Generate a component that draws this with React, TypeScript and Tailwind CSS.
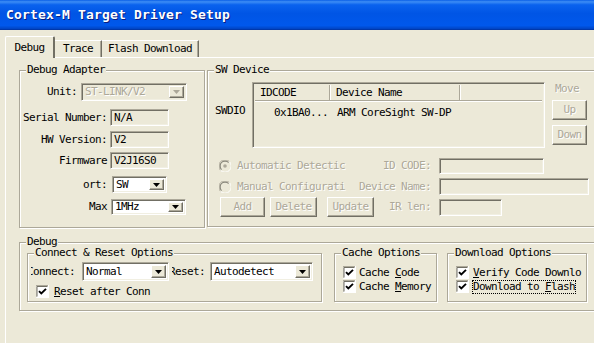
import React from "react";

const sunken =
  "border border-t-[#ACA899] border-l-[#ACA899] border-b-white border-r-white shadow-[inset_1px_1px_0_#716F64,inset_-1px_-1px_0_#F1EFE2]";
const raised =
  "border border-t-white border-l-white border-b-[#716F64] border-r-[#716F64] shadow-[inset_-1px_-1px_0_#ACA899]";
const dim = "text-[#ACA899] [text-shadow:1px_1px_0_#fff]";

function Group({ label, className, children }: { label: string; className: string; children?: React.ReactNode }) {
  return (
    <div className={`relative border border-[#ACA899] shadow-[inset_1px_1px_0_#fff,1px_1px_0_#fff] ${className}`}>
      <span className="absolute -top-[6px] left-[6px] bg-[#ECE9D8] px-[1px] leading-[10px] whitespace-nowrap">
        {label}
      </span>
      {children}
    </div>
  );
}

function Arrow({ disabled }: { disabled?: boolean }) {
  return (
    <svg width="7" height="4" viewBox="0 0 7 4">
      <path d="M0 0h7L3.5 4z" fill={disabled ? "#ACA899" : "#000"} />
    </svg>
  );
}

function Combo({ value, className, disabled }: { value: string; className: string; disabled?: boolean }) {
  return (
    <div className={`flex p-[2px] ${sunken} ${disabled ? "bg-[#ECE9D8]" : "bg-white"} ${className}`}>
      <span className={`flex-1 pl-[1px] flex items-center whitespace-nowrap ${disabled ? dim : ""}`}>{value}</span>
      <span className={`w-[15px] flex items-center justify-center bg-[#ECE9D8] ${raised}`}>
        <Arrow disabled={disabled} />
      </span>
    </div>
  );
}

function Field({ value, className }: { value?: string; className: string }) {
  return (
    <div className={`flex items-center pl-[3px] bg-[#ECE9D8] ${sunken} ${className}`}>
      <span className="whitespace-nowrap">{value}</span>
    </div>
  );
}

function Button({ label, className }: { label: string; className: string }) {
  return (
    <div className={`flex items-center justify-center bg-[#ECE9D8] ${raised} ${dim} ${className}`}>{label}</div>
  );
}

function Check() {
  return (
    <svg width="13" height="13" viewBox="0 0 13 13" className="shrink-0">
      <rect x="0" y="0" width="13" height="13" fill="#fff" />
      <path d="M0 12.5V0.5H12.5" stroke="#ACA899" fill="none" />
      <path d="M1 11.5V1.5H11.5" stroke="#716F64" fill="none" />
      <path d="M0.5 13V12.5H12.5V0" stroke="#fff" fill="none" />
      <path d="M3 6.2L5.3 8.5L10 3.8" stroke="#000" strokeWidth="1.9" fill="none" />
    </svg>
  );
}

function Radio({ on }: { on?: boolean }) {
  return (
    <svg width="12" height="12" viewBox="0 0 12 12" className="shrink-0">
      <circle cx="6" cy="6" r="5.5" fill="#ECE9D8" />
      <path d="M1.6 10.4A5.5 5.5 0 0 1 10.4 1.6" stroke="#ACA899" fill="none" />
      <path d="M2.5 9.5A4.5 4.5 0 0 1 9.5 2.5" stroke="#716F64" fill="none" />
      <path d="M10.4 1.6A5.5 5.5 0 0 1 1.6 10.4" stroke="#fff" fill="none" />
      {on && <circle cx="6" cy="6" r="1.8" fill="#ACA899" />}
    </svg>
  );
}

export default function App() {
  return (
    <div className="w-[594px] h-[343px] overflow-hidden bg-[#ECE9D8] text-black font-['DejaVu_Sans_Mono',monospace] text-[11px] tracking-[-0.62px] leading-[12px] flex flex-col">
      {/* title bar */}
      <div className="h-[30px] shrink-0 flex items-center pl-[6px] bg-[linear-gradient(to_bottom,#0A5FE6_0%,#3D8DF5_6%,#0A62EE_16%,#0055E5_45%,#0058EC_85%,#0046C8_95%,#00309C_100%)]">
        <span className="text-white font-bold text-[13px] tracking-[0.17px] [text-shadow:1px_1px_0_#0A1E80]">
          Cortex-M Target Driver Setup
        </span>
      </div>

      <div className="flex flex-1">
        <div className="w-[3px] bg-[#0058EE] shadow-[inset_-1px_0_0_#3B7CF0]" />
        <div className="flex-1 flex flex-col pl-[5px] pt-[6px]">
          {/* tabs */}
          <div className="flex items-end h-[21px]">
            <div className="relative z-10 -mb-px h-[22px] w-[50px] flex items-center justify-center bg-[#ECE9D8] border-t border-l border-white border-r-2 border-r-[#716F64] rounded-t-[2px]">
              Debug
            </div>
            <div className="h-[17px] w-[47px] flex items-center justify-center border-t border-white border-r border-r-[#716F64] shadow-[inset_-1px_0_0_#ACA899]">
              Trace
            </div>
            <div className="h-[17px] w-[97px] flex items-center justify-center border-t border-white border-r border-r-[#716F64] shadow-[inset_-1px_0_0_#ACA899]">
              Flash Download
            </div>
          </div>

          {/* panel */}
          <div className="flex-1 w-[600px] border-t border-l border-white pl-[13px] pt-[12px]">
            <div className="flex gap-[2px]">
              <Group label="Debug Adapter" className="w-[186px] h-[158px] shrink-0">
                <div className="flex flex-col">
                  <div className="mt-[12px] h-[18px] flex items-center">
                    <span className="w-[57px] text-right">Unit:</span>
                    <Combo value="ST-LINK/V2" disabled className="ml-[4px] w-[106px] h-[18px]" />
                  </div>
                  <div className="mt-[8px] h-[17px] flex items-center">
                    <span className="w-[87px] text-right">Serial Number:</span>
                    <Field value="N/A" className="ml-[3px] w-[59px] h-[17px]" />
                  </div>
                  <div className="mt-[5px] h-[17px] flex items-center">
                    <span className="w-[87px] text-right">HW Version:</span>
                    <Field value="V2" className="ml-[3px] w-[59px] h-[17px]" />
                  </div>
                  <div className="mt-[4px] h-[17px] flex items-center">
                    <span className="w-[87px] text-right">Firmware</span>
                    <Field value="V2J16S0" className="ml-[3px] w-[59px] h-[17px]" />
                  </div>
                  <div className="mt-[7px] h-[17px] flex items-center">
                    <span className="w-[87px] text-right">ort:</span>
                    <Combo value="SW" className="ml-[5px] w-[55px] h-[17px]" />
                  </div>
                  <div className="mt-[6px] h-[16px] flex items-center">
                    <span className="w-[87px] text-right">Max</span>
                    <Combo value="1MHz" className="ml-[4px] w-[75px] h-[16px]" />
                  </div>
                </div>
              </Group>

              <Group label="SW Device" className="w-[400px] h-[157px] shrink-0">
                <div className="flex mt-[11px]">
                  <span className="w-[44px] pl-[7px] pt-[23px]">SWDIO</span>
                  <div className={`w-[293px] h-[66px] flex flex-col p-[2px] bg-[#ECE9D8] ${sunken}`}>
                    <div className="flex h-[16px] border-b border-[#ACA899] shadow-[0_1px_0_#fff]">
                      <span className="w-[75px] pl-[5px] flex items-center border-r border-[#ACA899]">IDCODE</span>
                      <span className="w-[130px] pl-[6px] flex items-center border-r border-[#ACA899] shadow-[inset_1px_0_0_#fff]">
                        Device Name
                      </span>
                      <span className="flex-1 shadow-[inset_1px_0_0_#fff]" />
                    </div>
                    <div className="flex mt-[6px]">
                      <span className="w-[75px] text-right pr-[2px]">0x1BA0...</span>
                      <span className="pl-[7px]">ARM CoreSight SW-DP</span>
                    </div>
                  </div>
                  <div className="ml-[7px] w-[35px] flex flex-col">
                    <span className={`mt-[1px] pl-[3px] ${dim}`}>Move</span>
                    <Button label="Up" className="mt-[5px] h-[20px]" />
                    <Button label="Down" className="mt-[5px] h-[20px]" />
                  </div>
                </div>

                <div className="mt-[10px] h-[16px] flex items-center">
                  <div className="w-[147px] pl-[11px] flex items-center">
                    <Radio on />
                    <span className={`ml-[6px] whitespace-nowrap ${dim}`}>Automatic Detectic</span>
                  </div>
                  <span className={`w-[76px] text-right ${dim}`}>ID CODE:</span>
                  <Field className="ml-[8px] w-[105px] h-[16px]" />
                </div>
                <div className="mt-[4px] h-[17px] flex items-center">
                  <div className="w-[147px] pl-[11px] flex items-center">
                    <Radio />
                    <span className={`ml-[6px] whitespace-nowrap ${dim}`}>Manual Configurati</span>
                  </div>
                  <span className={`w-[76px] text-right whitespace-nowrap ${dim}`}>Device Name:</span>
                  <Field className="ml-[8px] w-[150px] h-[17px]" />
                </div>
                <div className="mt-[2px] h-[20px] flex items-center">
                  <div className="w-[181px] pl-[12px] flex h-[20px]">
                    <Button label="Add" className="w-[45px]" />
                    <Button label="Delete" className="ml-[5px] w-[47px]" />
                    <Button label="Update" className="ml-[10px] w-[47px]" />
                  </div>
                  <span className={`w-[42px] text-right whitespace-nowrap ${dim}`}>IR len:</span>
                  <Field className="ml-[8px] w-[63px] h-[17px]" />
                </div>
              </Group>
            </div>

            <Group label="Debug" className="mt-[14px] w-[590px] h-[69px]">
              <div className="flex pl-[7px] pt-[10px]">
                <Group label="Connect & Reset Options" className="w-[295px] h-[49px] shrink-0">
                  <div className="mt-[8px] h-[19px] flex items-center">
                    <div className="ml-[3px] w-[51px] pr-[7px] overflow-hidden flex justify-end whitespace-nowrap">
                      <span className="shrink-0">Connect:</span>
                    </div>
                    <Combo value="Normal" className="w-[87px] h-[19px]" />
                    <div className="ml-[3px] w-[38px] pr-[5px] overflow-hidden flex justify-end whitespace-nowrap">
                      <span className="shrink-0">Reset:</span>
                    </div>
                    <Combo value="Autodetect" className="w-[103px] h-[19px]" />
                  </div>
                  <div className="mt-[4px] h-[13px] pl-[8px] flex items-center">
                    <Check />
                    <span className="ml-[5px] whitespace-nowrap">
                      <u>R</u>eset after Conn
                    </span>
                  </div>
                </Group>

                <Group label="Cache Options" className="ml-[12px] w-[103px] h-[49px] shrink-0">
                  <div className="mt-[12px] h-[13px] pl-[8px] flex items-center">
                    <Check />
                    <span className="ml-[3px] whitespace-nowrap">
                      Cache <u>C</u>ode
                    </span>
                  </div>
                  <div className="mt-[1px] h-[13px] pl-[8px] flex items-center">
                    <Check />
                    <span className="ml-[3px] whitespace-nowrap">
                      Cache <u>M</u>emory
                    </span>
                  </div>
                </Group>

                <Group label="Download Options" className="ml-[10px] w-[140px] h-[49px] shrink-0">
                  <div className="mt-[12px] h-[13px] pl-[8px] flex items-center">
                    <Check />
                    <span className="ml-[4px] whitespace-nowrap">
                      <u>V</u>erify Code Downlo
                    </span>
                  </div>
                  <div className="mt-[1px] h-[13px] pl-[8px] flex items-center">
                    <Check />
                    <span className="ml-[4px] whitespace-nowrap outline-1 outline-dotted outline-black">
                      Download to <u>F</u>lash
                    </span>
                  </div>
                </Group>
              </div>
            </Group>
          </div>
        </div>
      </div>
    </div>
  );
}
